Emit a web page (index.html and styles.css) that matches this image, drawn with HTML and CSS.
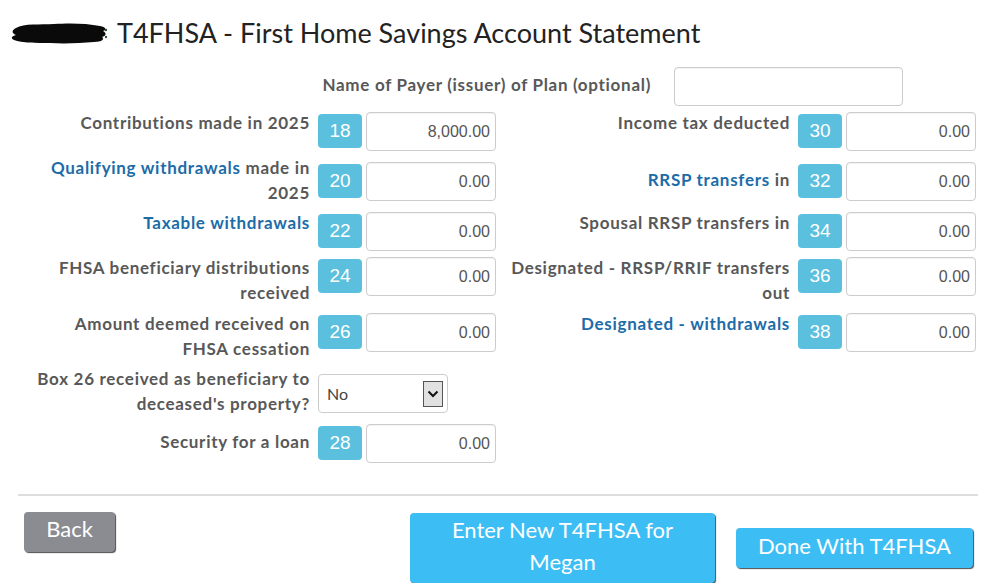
FILE: index.html
```html
<!DOCTYPE html>
<html lang="en">
<head>
<meta charset="utf-8">
<title>T4FHSA - First Home Savings Account Statement</title>
<link rel="stylesheet" href="styles.css">
</head>
<body>
<h1 class="title">
  <svg class="redact" width="98" height="24" viewBox="0 0 98 24" aria-hidden="true">
    <path d="M6 7 C14 2 30 4 44 3 C58 2 76 2 90 5 C96 6 97 9 93 10 C97 12 96 15 92 16 C95 18 92 21 84 21 C70 22 56 23 40 22 C26 22 12 22 4 19 C0 17 2 15 6 14 C1 12 2 9 6 7 Z" fill="#0a0a0a"/>
    <circle cx="96" cy="9" r="1.2" fill="#2c5a2c"/>
    <circle cx="96" cy="16" r="1.2" fill="#2c5a2c"/>
  </svg>
  <span>T4FHSA - First Home Savings Account Statement</span>
</h1>

<div class="payer">
  <label class="payer-label">Name of Payer (issuer) of Plan (optional)</label>
  <input class="field payer-input" type="text" value="">
</div>

<div class="form-grid">
  <div class="lbl">Contributions made in 2025</div>
  <div class="box"><span class="badge">18</span></div>
  <input class="field num" type="text" value="8,000.00">
  <div class="lbl">Income tax deducted</div>
  <div class="box"><span class="badge">30</span></div>
  <input class="field num" type="text" value="0.00">

  <div class="lbl lbl-raise"><a class="link">Qualifying withdrawals</a> made in 2025</div>
  <div class="box"><span class="badge">20</span></div>
  <input class="field num" type="text" value="0.00">
  <div class="lbl lbl-mid"><a class="link">RRSP transfers</a> in</div>
  <div class="box"><span class="badge">32</span></div>
  <input class="field num" type="text" value="0.00">

  <div class="lbl"><a class="link">Taxable withdrawals</a></div>
  <div class="box"><span class="badge">22</span></div>
  <input class="field num" type="text" value="0.00">
  <div class="lbl">Spousal RRSP transfers in</div>
  <div class="box"><span class="badge">34</span></div>
  <input class="field num" type="text" value="0.00">

  <div class="lbl">FHSA beneficiary distributions received</div>
  <div class="box"><span class="badge">24</span></div>
  <input class="field num" type="text" value="0.00">
  <div class="lbl">Designated - RRSP/RRIF transfers out</div>
  <div class="box"><span class="badge">36</span></div>
  <input class="field num" type="text" value="0.00">

  <div class="lbl">Amount deemed received on FHSA cessation</div>
  <div class="box"><span class="badge">26</span></div>
  <input class="field num" type="text" value="0.00">
  <div class="lbl"><a class="link">Designated - withdrawals</a></div>
  <div class="box"><span class="badge">38</span></div>
  <input class="field num" type="text" value="0.00">

  <div class="lbl lbl-select">Box 26 received as beneficiary to deceased's property?</div>
  <div class="select">
    <span class="select-value">No</span>
    <span class="select-arrow">
      <svg width="12" height="8" viewBox="0 0 12 8" aria-hidden="true"><path d="M1.5 1.5 L6 6 L10.5 1.5" fill="none" stroke="#111" stroke-width="2"/></svg>
    </span>
  </div>
  <div class="empty"></div>

  <div class="lbl lbl-last">Security for a loan</div>
  <div class="box"><span class="badge">28</span></div>
  <input class="field num" type="text" value="0.00">
  <div class="empty"></div>
</div>

<div class="rule"></div>

<div class="footer">
  <button class="btn btn-back">Back</button>
  <button class="btn btn-blue btn-new">Enter New T4FHSA for Megan</button>
  <button class="btn btn-blue btn-done">Done With T4FHSA</button>
</div>
</body>
</html>
```

FILE: styles.css
```css
* { box-sizing: border-box; }

body {
  margin: 0;
  background: #fff;
  font-family: Lato, "Open Sans", sans-serif;
  color: #555;
}

.title {
  display: flex;
  align-items: center;
  gap: 9px;
  margin: 0;
  padding: 16px 0 0 10px;
  font-size: 27px;
  line-height: 34px;
  font-weight: 400;
  color: #222;
}

.redact { display: block; flex: none; }

.payer {
  display: flex;
  align-items: flex-start;
  gap: 23px;
  margin: 17px 0 0 20px;
}

.payer-label {
  width: 631px;
  padding-top: 5px;
  text-align: right;
  font-size: 17px;
  line-height: 25px;
  font-weight: 700;
  letter-spacing: 0.7px;
  color: #585858;
}

.field {
  display: block;
  height: 39px;
  border: 1px solid #ccc;
  border-radius: 4px;
  background: #fff;
  box-shadow: inset 0 1px 1px rgba(0,0,0,0.05);
  font-family: "Liberation Sans", Arial, sans-serif;
  font-size: 16px;
  color: #555;
  outline: none;
}

.payer-input { width: 229px; }

.num {
  width: 130px;
  text-align: right;
  padding: 0 5px 0 6px;
}

.form-grid {
  display: grid;
  grid-template-columns: 294px 44px 130px 294px 44px 130px;
  grid-template-rows: 50px 50px 45px 56px 61px 50px 40px;
  column-gap: 4px;
  margin: 6px 0 0 20px;
}

.lbl {
  align-self: start;
  margin-top: -2px;
  padding: 0 4px 0 10px;
  text-align: right;
  font-size: 17px;
  line-height: 25px;
  font-weight: 700;
  letter-spacing: 0.7px;
  color: #585858;
}

.lbl-raise { margin-top: -7px; }
.lbl-mid { margin-top: 5px; }
.lbl-select { margin-top: -8px; }
.lbl-last { margin-top: 5px; }

.link { color: #1c6ca8; text-decoration: none; }

.box { padding-top: 2px; }

.badge {
  display: flex;
  align-items: center;
  justify-content: center;
  width: 44px;
  height: 34px;
  border-radius: 4px;
  background: #5bc0de;
  color: #fff;
  font-family: "Liberation Sans", Arial, sans-serif;
  font-size: 19px;
}

.select {
  grid-column: span 2;
  align-self: start;
  display: flex;
  align-items: center;
  justify-content: space-between;
  width: 130px;
  height: 39px;
  padding: 0 4px 0 8px;
  border: 1px solid #ccc;
  border-radius: 4px;
  background: #fff;
  font-size: 16px;
  color: #444;
}

.select-arrow {
  display: flex;
  align-items: center;
  justify-content: center;
  width: 20px;
  height: 26px;
  border: 1px solid #555;
  background: #e1e1e1;
}

.select-arrow svg { display: block; }

.empty { grid-column: span 3; }

.rule {
  height: 2px;
  margin: 30px 20px 0 18px;
  background: #ddd;
}

.footer {
  display: flex;
  align-items: center;
  padding: 16px 25px 0 24px;
}

.btn {
  border: none;
  border-radius: 4px;
  color: #fff;
  font-family: Lato, "Open Sans", sans-serif;
  font-size: 22px;
  line-height: 32px;
  cursor: pointer;
  box-shadow: 1px 1px 1px rgba(0,0,0,0.7);
}

.btn-back {
  align-self: flex-start;
  width: 91px;
  height: 40px;
  padding: 0 0 6px;
  background: #8b8c91;
}

.btn-blue { background: #3cbef5; }

.btn-new {
  margin-left: auto;
  margin-top: 1px;
  width: 305px;
  height: 70px;
  padding: 0 36px 4px;
}

.btn-done {
  margin-left: 21px;
  width: 237px;
  height: 40px;
  padding: 0 0 4px;
}
```
